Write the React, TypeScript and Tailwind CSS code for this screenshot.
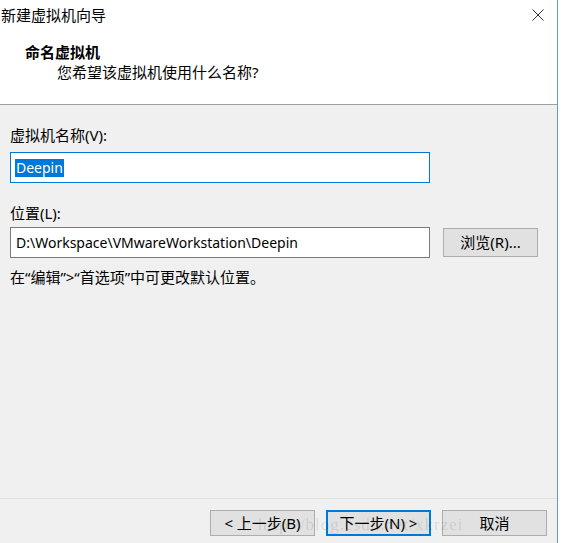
const font = "font-['Noto_Sans','Noto_Sans_CJK_SC',sans-serif]";

function Button({ children, primary }: { children: React.ReactNode; primary?: boolean }) {
  return (
    <div
      className={`w-[105px] h-[26px] flex items-center justify-center bg-[#e1e1e1] text-[15px] text-black ${
        primary ? "border-2 border-[#0078d7]" : "border border-[#adadad]"
      }`}
    >
      {children}
    </div>
  );
}

export default function App() {
  return (
    <div className={`w-[563px] h-[543px] flex bg-white ${font} text-black overflow-hidden`}>
      <div className="w-[558px] h-full flex flex-col border-r border-[#6d97cf]">
        {/* title bar */}
        <div className="h-[30px] flex items-center justify-between bg-white">
          <span className="text-[15px] leading-5 pl-px">新建虚拟机向导</span>
          <svg width="12" height="12" viewBox="0 0 12 12" className="mr-[13px]">
            <path d="M0.5 0.5 L11.5 11.5 M11.5 0.5 L0.5 11.5" stroke="#333" strokeWidth="1" fill="none" />
          </svg>
        </div>

        {/* header */}
        <div className="h-[75px] bg-white border-b border-[#a0a0a0] pt-[12px]">
          <div className="pl-[25px] text-[15px] leading-5 font-bold">命名虚拟机</div>
          <div className="pl-[57px] text-[15px] leading-5">您希望该虚拟机使用什么名称?</div>
        </div>

        {/* body */}
        <div className="flex-1 bg-[#f0f0f0] flex flex-col">
          <div className="px-[10px] pt-[20px] flex-1">
            <div className="text-[15px] leading-5">虚拟机名称(V):</div>
            <div className="mt-[7px] w-[420px] h-[31px] bg-white border border-[#0078d7] flex items-center px-[4px]">
              <span className="bg-[#0078d7] text-white text-[14px] leading-[18px] px-px">Deepin</span>
            </div>

            <div className="mt-[20px] text-[15px] leading-5">位置(L):</div>
            <div className="mt-[4px] flex items-center gap-[13px]">
              <div className="w-[420px] h-[31px] bg-white border border-[#7a7a7a] flex items-center px-[5px] text-[14px]">
                D:\Workspace\VMwareWorkstation\Deepin
              </div>
              <div className="w-[95px] h-[29px] bg-[#e1e1e1] border border-[#adadad] flex items-center justify-center text-[15px]">
                浏览(R)...
              </div>
            </div>
            <div className="mt-[9px] text-[15px] leading-5">在“编辑”&gt;“首选项”中可更改默认位置。</div>
          </div>

          {/* footer */}
          <div className="relative h-[45px] border-t border-[#dfdfdf] flex items-start justify-end gap-[11px] pr-[10px] pt-[11px]">
            <Button>&lt; 上一步(B)</Button>
            <Button primary>下一步(N) &gt;</Button>
            <Button>取消</Button>
            <span className="absolute left-[258px] top-[13px] text-[17px] font-['Liberation_Serif',serif] tracking-[1px] text-black/10 pointer-events-none">
              http://blog.csdn.net/xkrzei
            </span>
          </div>
        </div>
      </div>
    </div>
  );
}
